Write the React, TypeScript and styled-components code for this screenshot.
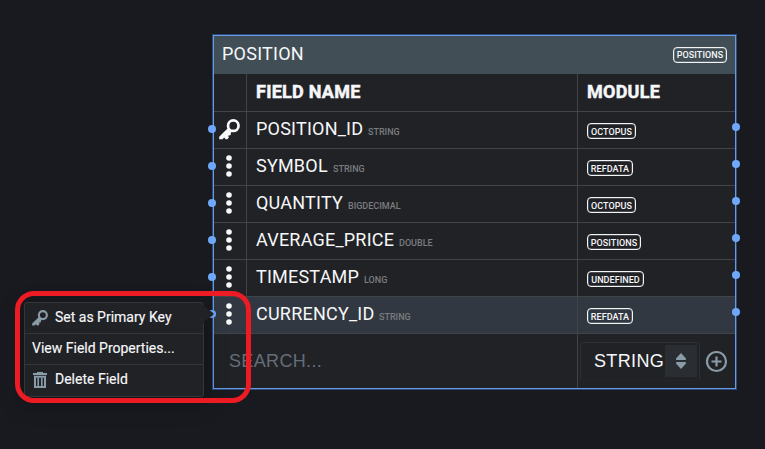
import React from "react";
import styled, { createGlobalStyle } from "styled-components";

const Global = createGlobalStyle`
  * { box-sizing: border-box; }
  body { margin: 0; background: #191a20; color: #f6f7f9; font-family: Roboto, sans-serif; overflow: hidden; }
`;

const Canvas = styled.main`
  position: relative;
  width: 765px;
  height: 449px;
  background: #191a20;
`;

const EntityNode = styled.section`
  position: absolute;
  left: 213px;
  top: 35px;
  width: 523px;
  height: 354px;
  border: 1px solid #659be9;
  box-shadow: 0 0 0 1px #304a73;
  display: flex;
  flex-direction: column;
  background: #212226;
`;

const Title = styled.header`
  height: 38px;
  flex: none;
  display: flex;
  align-items: center;
  justify-content: space-between;
  padding: 0 8px;
  background: #414e56;
  font-size: 18px;
  letter-spacing: 0.24px;
`;

const TitleText = styled.span`
  padding-bottom: 3px;
`;

const Row = styled.div<{ $active?: boolean }>`
  display: grid;
  grid-template-columns: 33px 331px 1fr;
  height: 37px;
  flex: none;
  position: relative;
  border-bottom: 1px solid #434448;
  background: ${(p) => (p.$active ? "#323841" : "transparent")};
`;

const HeadRow = styled(Row)`
  height: 38px;
  font-weight: 700;
  -webkit-text-stroke: 0.5px #f6f7f9;
  letter-spacing: 0.25px;
`;

const Cell = styled.div`
  display: flex;
  align-items: center;
  border-right: 1px solid #434448;
  padding-left: 9px;
  font-size: 18px;
  white-space: pre;
`;

const HeadCell = styled(Cell)`
  padding-bottom: 2px;
  &:last-of-type { border-right: 0; }
`;

const ModuleCell = styled(Cell)`
  border-right: 0;
`;

const IconCell = styled(Cell)`
  padding: 0 1px 1px 0;
  justify-content: center;
`;

const MoreCell = styled(IconCell)`
  padding: 0 2px 2px 0;
`;

const FieldName = styled.span<{ $width: number }>`
  width: ${(p) => p.$width}px;
  padding-bottom: 4px;
  letter-spacing: 0.22px;
`;

const TypeName = styled.span`
  color: #7b7d80;
  font-size: 9px;
  font-weight: 500;
  margin: 4px 0 0 5px;
`;

const Badge = styled.span<{ $width: number }>`
  width: ${(p) => p.$width}px;
  height: 16px;
  border: 1px solid #f3f4f5;
  box-shadow: inset 0 0 0 0.5px rgba(243, 244, 245, 0.4);
  border-radius: 4px;
  display: flex;
  align-items: center;
  justify-content: center;
  font-size: 9px;
  font-weight: 500;
  letter-spacing: 0.05px;
  line-height: 14px;
  padding-top: 1px;
  margin-top: 2px;
`;

const TitleBadge = styled(Badge)`
  margin-top: -1px;
`;

const Port = styled.i<{ $side: "left" | "right" }>`
  position: absolute;
  width: 8px;
  height: 8px;
  border-radius: 50%;
  background: #6fa8fb;
  top: ${(p) => (p.$side === "left" ? 13 : 11)}px;
  ${(p) => (p.$side === "left" ? "left: -6px" : "right: -5px")};
`;

const Footer = styled.footer`
  flex: 1;
  display: grid;
  grid-template-columns: 364px 1fr;
`;

const Search = styled.div`
  display: flex;
  align-items: center;
  border-right: 1px solid #434448;
  padding-left: 15px;
  font: 18px "Liberation Sans", Arial, sans-serif;
  letter-spacing: 0.35px;
  color: #666c78;
`;

const Controls = styled.div`
  display: flex;
  align-items: center;
  padding-left: 2px;
`;

const Select = styled.div`
  width: 120px;
  height: 39px;
  border: 1px solid #2d2f34;
  border-bottom-color: #242529;
  border-radius: 3px;
  display: flex;
  align-items: center;
  padding-left: 13px;
  padding-right: 2px;
  justify-content: space-between;
  font: 18px "Liberation Sans", Arial, sans-serif;
  letter-spacing: 0.35px;
  margin-right: 5px;
`;

const Stepper = styled.span`
  width: 32px;
  height: 32px;
  background: #2a2e33;
  display: flex;
  align-items: center;
  justify-content: center;
`;

const Menu = styled.nav`
  position: absolute;
  left: 24px;
  top: 302px;
  width: 180px;
  height: 95px;
  border: 1px solid #34363a;
  border-radius: 3px;
  background: #212226;
  box-shadow: 0 6px 22px rgba(0, 0, 0, 0.35);
`;

const MenuItem = styled.div`
  height: 31px;
  display: flex;
  align-items: center;
  gap: 7px;
  padding: 0 0 2px 7px;
  font-size: 14px;
  border-bottom: 1px solid #34363a;
  -webkit-text-stroke: 0.15px #f6f7f9;
  svg { margin-top: 2px; }
  &:last-of-type { border-bottom: 0; padding-bottom: 3px; }
`;

const Arrow = styled.svg`
  position: absolute;
  left: 203px;
  top: 301px;
`;

const Highlight = styled.div`
  position: absolute;
  left: 15px;
  top: 291px;
  width: 236px;
  height: 112px;
  border: 5px solid #ed1b24;
  border-radius: 19px;
`;

function KeyIcon({ size, color }: { size: number; color: string }) {
  return (
    <svg width={size} height={size} viewBox="0 0 20 20">
      <circle cx="13.6" cy="6.4" r="5" fill="none" stroke={color} strokeWidth="2.6" />
      <path d="M8.6 8.6 0.2 17v2.4h3.2l1.5-1.7 1.4 1.7h1.6l1.5-1.9-.7-1.6 2.5-.6v-2l1-1.3Z" fill={color} />
    </svg>
  );
}

function MoreIcon() {
  return (
    <svg width="6" height="22" viewBox="0 0 6 22" fill="#f8f9fa">
      <circle cx="3" cy="3" r="2.8" />
      <circle cx="3" cy="11" r="2.8" />
      <circle cx="3" cy="19" r="2.8" />
    </svg>
  );
}

function TrashIcon() {
  return (
    <svg width="16" height="16" viewBox="0 0 16 16" fill="none" stroke="#8a9ba8">
      <path d="M1 2h14M5 1h6" strokeWidth="2" />
      <path d="M3 4v11h10V4M2 4.8h12" strokeWidth="2" />
      <path d="M6.2 6v8M9.8 6v8" strokeWidth="1.6" />
    </svg>
  );
}

const fields = [
  { name: "POSITION_ID", width: 107, type: "STRING", module: "OCTOPUS", badge: 49, primary: true },
  { name: "SYMBOL", width: 72, type: "STRING", module: "REFDATA", badge: 46 },
  { name: "QUANTITY", width: 87, type: "BIGDECIMAL", module: "OCTOPUS", badge: 49 },
  { name: "AVERAGE_PRICE", width: 138, type: "DOUBLE", module: "POSITIONS", badge: 54 },
  { name: "TIMESTAMP", width: 103, type: "LONG", module: "UNDEFINED", badge: 57 },
  { name: "CURRENCY_ID", width: 118, type: "STRING", module: "REFDATA", badge: 46, active: true },
];

export default function App() {
  return (
    <Canvas>
      <Global />
      <EntityNode>
        <Title>
          <TitleText>POSITION</TitleText>
          <TitleBadge $width={54}>POSITIONS</TitleBadge>
        </Title>
        <HeadRow>
          <IconCell />
          <HeadCell>FIELD NAME</HeadCell>
          <HeadCell>MODULE</HeadCell>
        </HeadRow>
        {fields.map((f) => (
          <Row key={f.name} $active={f.active}>
            {f.primary ? (
              <IconCell><KeyIcon size={21} color="#f8f9fa" /></IconCell>
            ) : (
              <MoreCell><MoreIcon /></MoreCell>
            )}
            <Cell>
              <FieldName $width={f.width}>{f.name}</FieldName>
              <TypeName>{f.type}</TypeName>
            </Cell>
            <ModuleCell>
              <Badge $width={f.badge}>{f.module}</Badge>
            </ModuleCell>
            <Port $side="left" />
            <Port $side="right" />
          </Row>
        ))}
        <Footer>
          <Search>SEARCH...</Search>
          <Controls>
            <Select>
              STRING
              <Stepper>
                <svg width="12" height="16" viewBox="0 0 12 16" fill="#8a9ba8">
                  <path d="M6 0 11 5.5Q11.5 7 10 7H2Q.5 7 1 5.5ZM6 16 1 10.5Q.5 9 2 9h8q1.5 0 1 1.5Z" />
                </svg>
              </Stepper>
            </Select>
            <svg width="23" height="23" viewBox="0 0 23 23" fill="none" stroke="#8a9ba8" strokeWidth="2.2">
              <circle cx="11.5" cy="11.5" r="9.5" />
              <path d="M6.5 11.5h10M11.5 6.5v10" />
            </svg>
          </Controls>
        </Footer>
      </EntityNode>
      <Menu>
        <MenuItem><KeyIcon size={16} color="#8a9ba8" />Set as Primary Key</MenuItem>
        <MenuItem>View Field Properties...</MenuItem>
        <MenuItem><TrashIcon />Delete Field</MenuItem>
      </Menu>
      <Arrow width="12" height="26" viewBox="0 0 12 26">
        <path d="M0 2C1 6 3 7 9 11Q12 13 9 15C3 19 1 20 0 24Z" fill="#212226" />
      </Arrow>
      <Highlight />
    </Canvas>
  );
}
